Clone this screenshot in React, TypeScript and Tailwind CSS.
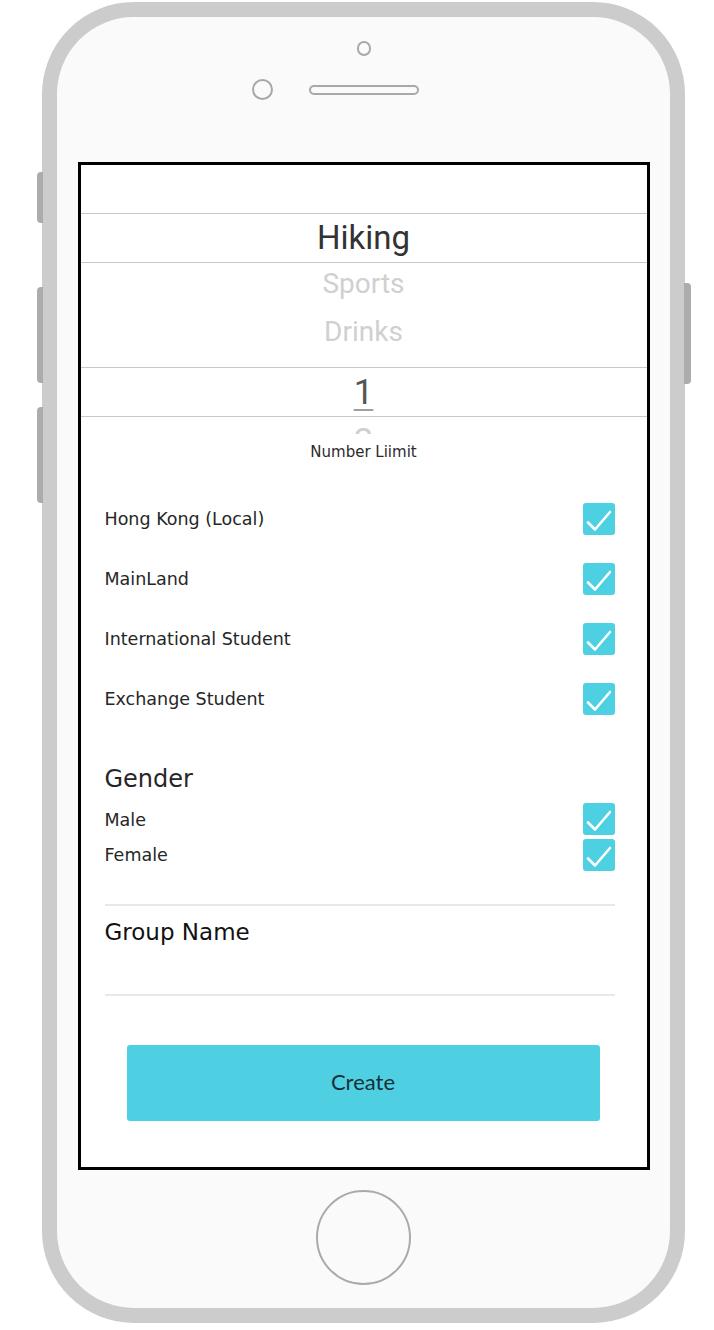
const hand = { fontFamily: '"Comic Sans MS", "DejaVu Sans", sans-serif' }
const picker = { fontFamily: "Roboto, sans-serif" }

function Tick() {
  return (
    <div className="w-[32px] h-[32px] rounded-[3px] bg-[#4dd0e1] flex items-center justify-center">
      <svg width="32" height="32" viewBox="0 0 32 32" fill="none">
        <polyline points="5,19.5 12,26.5 27,9" stroke="white" strokeWidth="2.6" strokeLinecap="round" strokeLinejoin="round" />
      </svg>
    </div>
  )
}

const origins = ["Hong Kong (Local)", "MainLand", "International Student", "Exchange Student"]

export default function App() {
  return (
    <div className="w-[714px] h-[1330px] bg-white relative">
      {/* phone body */}
      <div className="absolute left-[42px] top-[2px] w-[643px] h-[1321px] rounded-[92px] border-[15px] border-[#cccccc] bg-[#fafafa] flex flex-col items-center">
        {/* side buttons */}
        <div className="absolute left-[-20px] top-[155px] w-[6px] h-[51px] rounded-l-[4px] bg-[#acacac]" />
        <div className="absolute left-[-20px] top-[270px] w-[6px] h-[96px] rounded-l-[4px] bg-[#acacac]" />
        <div className="absolute left-[-20px] top-[390px] w-[6px] h-[96px] rounded-l-[4px] bg-[#acacac]" />
        <div className="absolute right-[-21px] top-[266px] w-[7px] h-[101px] rounded-r-[4px] bg-[#acacac]" />

        <div className="mt-[24px] w-[14px] h-[15px] rounded-full border-[2.5px] border-[#a8a8a8]" />
        <div className="mt-[23px] flex items-center gap-[36px]">
          <div className="w-[21px] h-[21px] rounded-full border-[2.5px] border-[#a8a8a8]" />
          <div className="w-[110px] h-[10px] rounded-full border-[2.5px] border-[#a8a8a8]" />
          <div className="w-[21px]" />
        </div>

        {/* screen */}
        <div className="mt-[62px] w-[572px] h-[1008px] border-[3px] border-black bg-white flex flex-col">
          {/* category picker */}
          <div className="h-[48px]" />
          <div className="h-px bg-[#c8c8c8]" />
          <div className="h-[48px] flex items-center justify-center text-[33px] text-[#333]" style={picker}>
            Hiking
          </div>
          <div className="h-px bg-[#c8c8c8]" />
          <div className="h-[104px] flex flex-col items-center text-[28px] text-[#d0d0d0]" style={picker}>
            <div className="mt-[1px] h-[40px] leading-[40px]">Sports</div>
            <div className="mt-[4px] h-[48px] leading-[48px]">Drinks</div>
          </div>
          <div className="h-px bg-[#c8c8c8]" />
          {/* number picker */}
          <div className="h-[48px] flex items-center justify-center text-[35px] text-[#555]" style={picker}>
            <span className="leading-none underline decoration-2 decoration-[#a0a0a0] underline-offset-[5px]">1</span>
          </div>
          <div className="h-px bg-[#c8c8c8]" />
          <div className="h-[17px] overflow-hidden flex justify-center text-[35px] leading-[35px] text-[#d0d0d0]" style={picker}>
            <div className="pt-[7px]">2</div>
          </div>
          <div className="mt-[8px] text-center text-[15px] leading-[20px] text-[#2b2b2b]" style={hand}>
            Number Liimit
          </div>

          <div className="pl-[24px] pr-[32px] flex flex-col" style={hand}>
            <div className="mt-[27px] flex flex-col">
              {origins.map((o) => (
                <div key={o} className="h-[60px] flex items-center justify-between">
                  <span className="text-[17.5px] text-[#262626]">{o}</span>
                  <Tick />
                </div>
              ))}
            </div>

            <div className="mt-[34px] text-[24px] leading-[32px] text-[#262626]">Gender</div>
            <div className="mt-[8px] h-[32px] flex items-center justify-between">
              <span className="text-[17.5px] text-[#262626] pt-[2px]">Male</span>
              <Tick />
            </div>
            <div className="mt-[4px] h-[32px] flex items-center justify-between">
              <span className="text-[17.5px] text-[#262626]">Female</span>
              <Tick />
            </div>

            <div className="mt-[33px] h-[2px] bg-[#e8e8e8]" />
            <div className="mt-[10px] text-[23px] leading-[32px] text-[#111]">Group Name</div>
            <div className="mt-[46px] h-[2px] bg-[#e8e8e8]" />
          </div>

          <button
            className="mt-[49px] ml-[46px] w-[473px] h-[76px] rounded-[3px] bg-[#4fd0e2] text-[22px] leading-none pb-[3px] text-[#173038]"
            style={{ fontFamily: "Lato, sans-serif" }}
          >
            Create
          </button>
        </div>

        {/* home button */}
        <div className="mt-[20px] w-[95px] h-[95px] rounded-full border-[2.5px] border-[#aaaaaa]" />
      </div>
    </div>
  )
}
